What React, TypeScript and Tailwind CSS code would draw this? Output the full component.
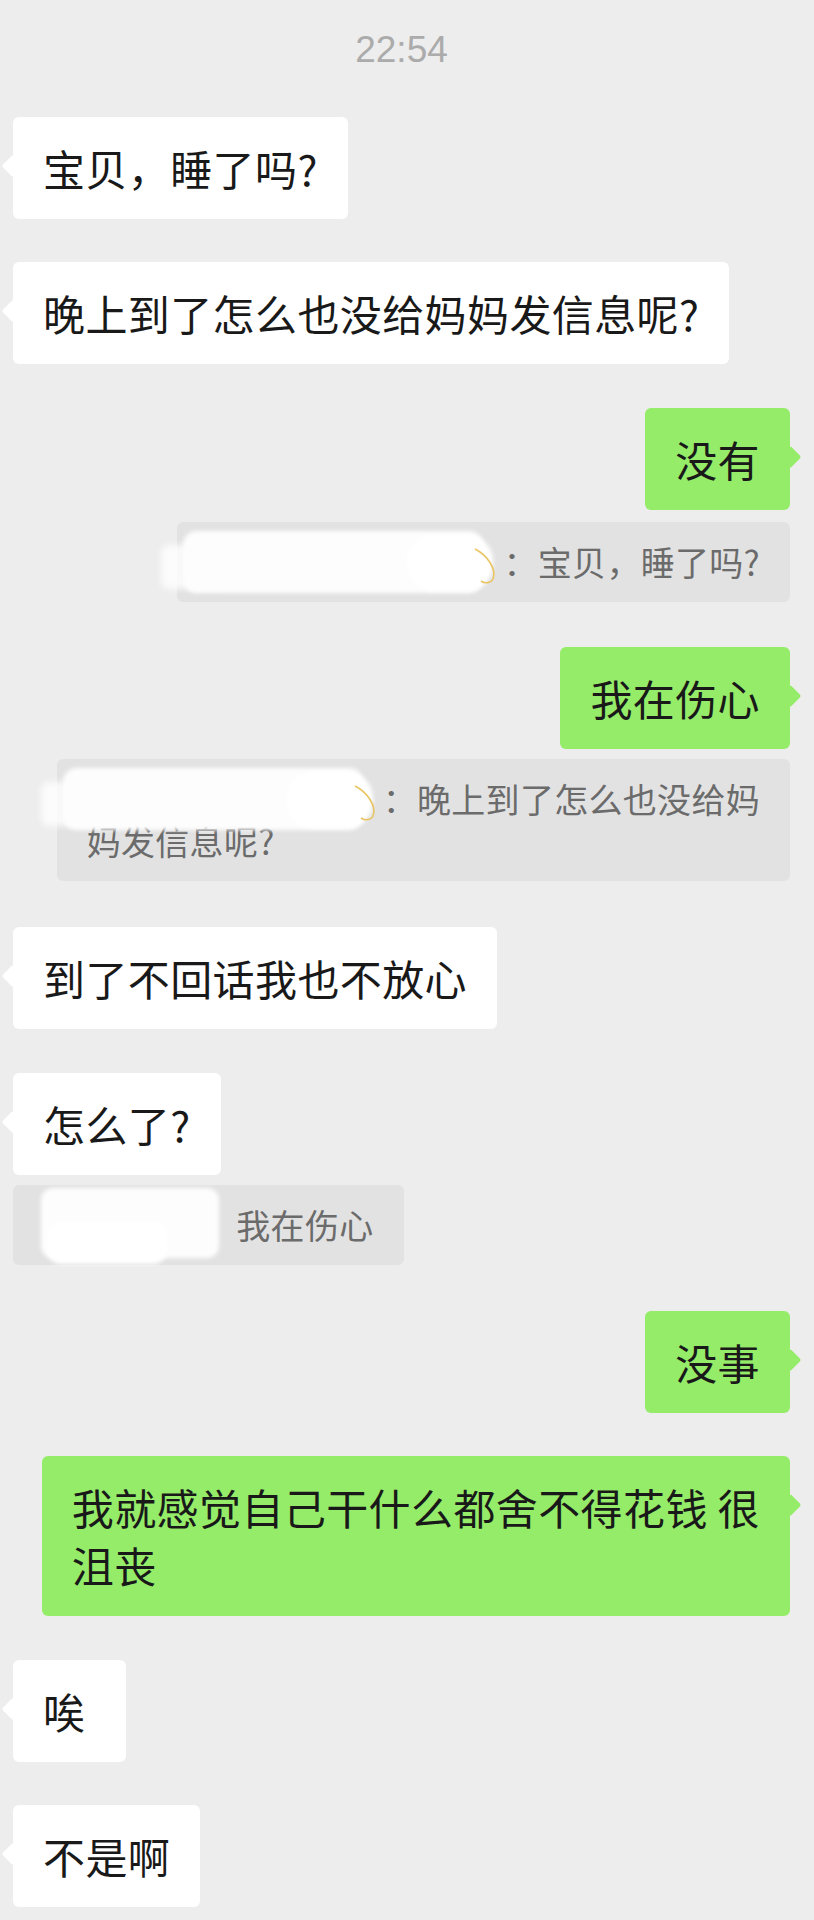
import type { ReactNode } from "react";

const Tail = ({ me }: { me: boolean }) => (
  <span
    className={
      me
        ? "absolute right-[-8px] top-[41px] h-[16px] w-[16px] rotate-45 rounded-[2px] bg-[#95ec69]"
        : "absolute left-[-8px] top-[41px] h-[16px] w-[16px] rotate-45 rounded-[2px] bg-white"
    }
  />
);

const Bubble = ({
  me = false,
  className = "",
  children,
}: {
  me?: boolean;
  className?: string;
  children: ReactNode;
}) => (
  <div className={`flex ${me ? "justify-end" : "justify-start"} ${className}`}>
    <div
      className={`relative min-w-[113px] max-w-[777px] whitespace-nowrap rounded-[6px] px-[30px] py-[22px] text-[42px] leading-[58px] tracking-[0.4px] text-[#191919] ${
        me ? "bg-[#95ec69]" : "bg-white"
      }`}
    >
      <Tail me={me} />
      <p className="relative">{children}</p>
    </div>
  </div>
);

const Quote = ({
  me = false,
  className = "",
  children,
}: {
  me?: boolean;
  className?: string;
  children: ReactNode;
}) => (
  <div className={`flex ${me ? "justify-end" : "justify-start"} ${className}`}>
    <div className="max-w-[777px] whitespace-nowrap rounded-[6px] bg-[#e2e2e2] px-[30px] py-[19px] text-[34px] leading-[42px] tracking-[0.3px] text-[#6b6b6b]">
      {children}
    </div>
  </div>
);

// redacted name: white smear painted over it
const Hidden = ({ wide = true, arc = true }: { wide?: boolean; arc?: boolean }) => (
  <span className={`relative inline-block h-[42px] align-top ${wide ? "w-[296px]" : "w-[159px]"}`}>
    {wide ? (
      <>
        <span className="absolute left-[-46px] top-[4px] h-[44px] w-[66px] rounded-[8px] bg-white/80 blur-[3px]" />
        <span className="absolute left-[-24px] top-[-10px] h-[62px] w-[300px] rounded-[14px] bg-[#fdfdfd] blur-[2px]" />
        <span className="absolute left-[200px] top-[-6px] h-[56px] w-[86px] rounded-[26px] bg-white blur-[2px]" />
      </>
    ) : (
      <>
        <span className="absolute left-[-2px] top-[-16px] h-[70px] w-[178px] rounded-[12px] bg-[#fdfdfd] blur-[2px]" />
        <span className="absolute left-[4px] top-[18px] h-[42px] w-[120px] rounded-[14px] bg-white blur-[2px]" />
      </>
    )}
    {arc && (
      <svg
        className="absolute left-[264px] top-[6px] h-[38px] w-[28px] blur-[0.4px]"
        viewBox="0 0 28 38"
        fill="none"
      >
        <path d="M4 2 C 16 8, 26 22, 22 32 C 20 36, 14 37, 10 34" stroke="#e8c463" strokeWidth="1.6" />
      </svg>
    )}
  </span>
);

export default function App() {
  return (
    <div className="min-h-[1920px] w-full bg-[#ededed] font-['Noto_Sans_CJK_SC',sans-serif]">
      <div className="flex flex-col pl-[13px] pr-[24px]">
        <p className="mt-[28px] text-center font-['Liberation_Sans',sans-serif] text-[37px] leading-[44px] text-[#ababab]">
          22:54
        </p>

        <Bubble className="mt-[45px]">宝贝，睡了吗?</Bubble>
        <Bubble className="mt-[43px]">晚上到了怎么也没给妈妈发信息呢?</Bubble>

        <Bubble me className="mt-[44px]">没有</Bubble>
        <Quote me className="mt-[12px]">
          <Hidden />
          ：宝贝，睡了吗?
        </Quote>

        <Bubble me className="mt-[45px]">我在伤心</Bubble>
        <Quote me className="mt-[10px]">
          <Hidden />
          ：晚上到了怎么也没给妈
          <br />
          妈发信息呢?
        </Quote>

        <Bubble className="mt-[46px]">到了不回话我也不放心</Bubble>
        <Bubble className="mt-[44px]">怎么了?</Bubble>
        <Quote className="mt-[10px]">
          <Hidden wide={false} arc={false} />
          ：我在伤心
        </Quote>

        <Bubble me className="mt-[46px]">没事</Bubble>
        <Bubble me className="mt-[43px]">
          我就感觉自己干什么都舍不得花钱 很
          <br />
          沮丧
        </Bubble>

        <Bubble className="mt-[44px]">唉</Bubble>
        <Bubble className="mt-[43px]">不是啊</Bubble>
      </div>
    </div>
  );
}
